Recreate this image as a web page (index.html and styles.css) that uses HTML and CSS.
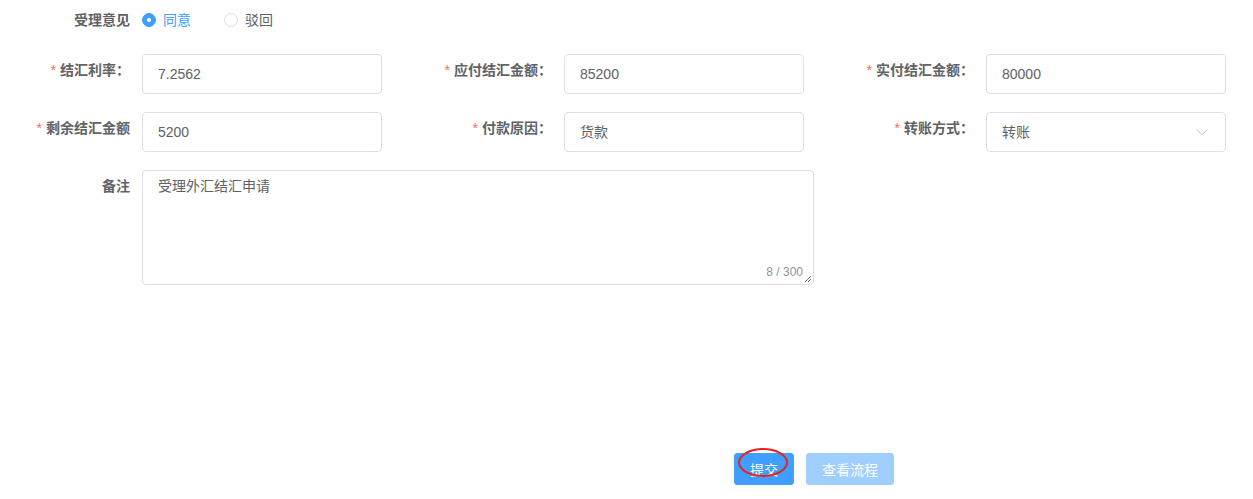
FILE: index.html
```html
<!DOCTYPE html>
<html lang="zh-CN">
<head>
    <meta charset="UTF-8">
    <title>受理外汇结汇</title>
    <link rel="stylesheet" href="styles.css">
</head>
<body>
    <form class="form">
        <!-- 受理意见 -->
        <div class="form-item radio-row">
            <label class="item-label">受理意见</label>
            <div class="radio-group">
                <span class="radio checked"><span class="radio-inner"></span>同意</span>
                <span class="radio"><span class="radio-inner"></span>驳回</span>
            </div>
        </div>

        <div class="grid">
            <div class="form-item">
                <label class="item-label"><i class="req">*</i>结汇利率：</label>
                <div class="input">7.2562</div>
            </div>
            <div class="form-item">
                <label class="item-label"><i class="req">*</i>应付结汇金额：</label>
                <div class="input">85200</div>
            </div>
            <div class="form-item">
                <label class="item-label"><i class="req">*</i>实付结汇金额：</label>
                <div class="input">80000</div>
            </div>
            <div class="form-item">
                <label class="item-label"><i class="req">*</i>剩余结汇金额</label>
                <div class="input">5200</div>
            </div>
            <div class="form-item">
                <label class="item-label"><i class="req">*</i>付款原因：</label>
                <div class="input">货款</div>
            </div>
            <div class="form-item">
                <label class="item-label"><i class="req">*</i>转账方式：</label>
                <div class="input select">
                    <span>转账</span>
                    <svg class="arrow" width="12" height="12" viewBox="0 0 12 12"><path d="M0.5 3.5 L6 8.5 L11.5 3.5" fill="none" stroke="#c0c4cc" stroke-width="1"/></svg>
                </div>
            </div>
        </div>

        <!-- 备注 -->
        <div class="form-item">
            <label class="item-label">备注</label>
            <div class="textarea">
                受理外汇结汇申请
                <span class="count">8 / 300</span>
                <svg class="resize" width="8" height="8" viewBox="0 0 8 8"><path d="M7 1 L1 7 M7 4 L4 7" stroke="#777" stroke-width="1"/></svg>
            </div>
        </div>

        <div class="footer">
            <span class="btn-wrap">
                <button type="button" class="btn primary">提交</button>
                <span class="mark"></span>
            </span>
            <button type="button" class="btn primary disabled">查看流程</button>
        </div>
    </form>
</body>
</html>
```

FILE: styles.css
```css
/* 基础样式 */
body {
    margin: 0;
    font-family: "Liberation Sans", "Noto Sans CJK SC", sans-serif;
    font-size: 14px;
    color: #606266;
    background: #fff;
}

.form {
    padding: 4px 0 0 22px;
}

.grid {
    display: grid;
    grid-template-columns: 422px 422px 1fr;
}

.form-item {
    display: flex;
    align-items: flex-start;
    margin-bottom: 18px;
}

.item-label {
    width: 120px;
    padding-right: 12px;
    box-sizing: border-box;
    text-align: right;
    line-height: 32px;
    font-weight: bold;
    color: #606266;
    flex: none;
}

.req {
    font-style: normal;
    font-weight: normal;
    color: #f56c6c;
    margin-right: 4px;
}

/* 单选 */
.radio-group {
    display: flex;
    line-height: 32px;
}
.radio {
    display: flex;
    align-items: center;
    margin-right: 33px;
    color: #606266;
}
.radio-inner {
    width: 14px;
    height: 14px;
    box-sizing: border-box;
    border: 1px solid #dcdfe6;
    border-radius: 50%;
    margin-right: 7px;
    position: relative;
}
.radio.checked {
    color: #409eff;
}
.radio.checked .radio-inner {
    background: #409eff;
    border-color: #409eff;
}
.radio.checked .radio-inner::after {
    content: "";
    position: absolute;
    left: 4px;
    top: 4px;
    width: 4px;
    height: 4px;
    border-radius: 50%;
    background: #fff;
}

/* 输入框 */
.input {
    width: 240px;
    height: 40px;
    box-sizing: border-box;
    border: 1px solid #dcdfe6;
    border-radius: 4px;
    padding: 0 15px;
    line-height: 38px;
    color: #606266;
}
.select {
    display: flex;
    justify-content: space-between;
    align-items: center;
    padding-right: 17px;
}

.textarea {
    position: relative;
    width: 672px;
    height: 115px;
    box-sizing: border-box;
    border: 1px solid #dcdfe6;
    border-radius: 4px;
    padding: 5px 15px;
    line-height: 21px;
}
.count {
    position: absolute;
    right: 10px;
    bottom: 5px;
    font-size: 12px;
    line-height: 14px;
    color: #909399;
}
.resize {
    position: absolute;
    right: 1px;
    bottom: 1px;
}

/* 按钮 */
.footer {
    display: flex;
    gap: 12px;
    margin-top: 168px;
    padding-left: 712px;
}
.btn-wrap {
    position: relative;
}
.btn {
    height: 32px;
    padding: 0 15px;
    border: 1px solid #409eff;
    border-radius: 3px;
    font-family: inherit;
    font-size: 14px;
    color: #fff;
    background: #409eff;
}
.btn.disabled {
    background: #a0cfff;
    border-color: #a0cfff;
}
.mark {
    position: absolute;
    left: 4px;
    top: -5px;
    width: 50px;
    height: 29px;
    border: 2.5px solid #e8221c;
    border-radius: 50%;
    box-sizing: border-box;
}
```
